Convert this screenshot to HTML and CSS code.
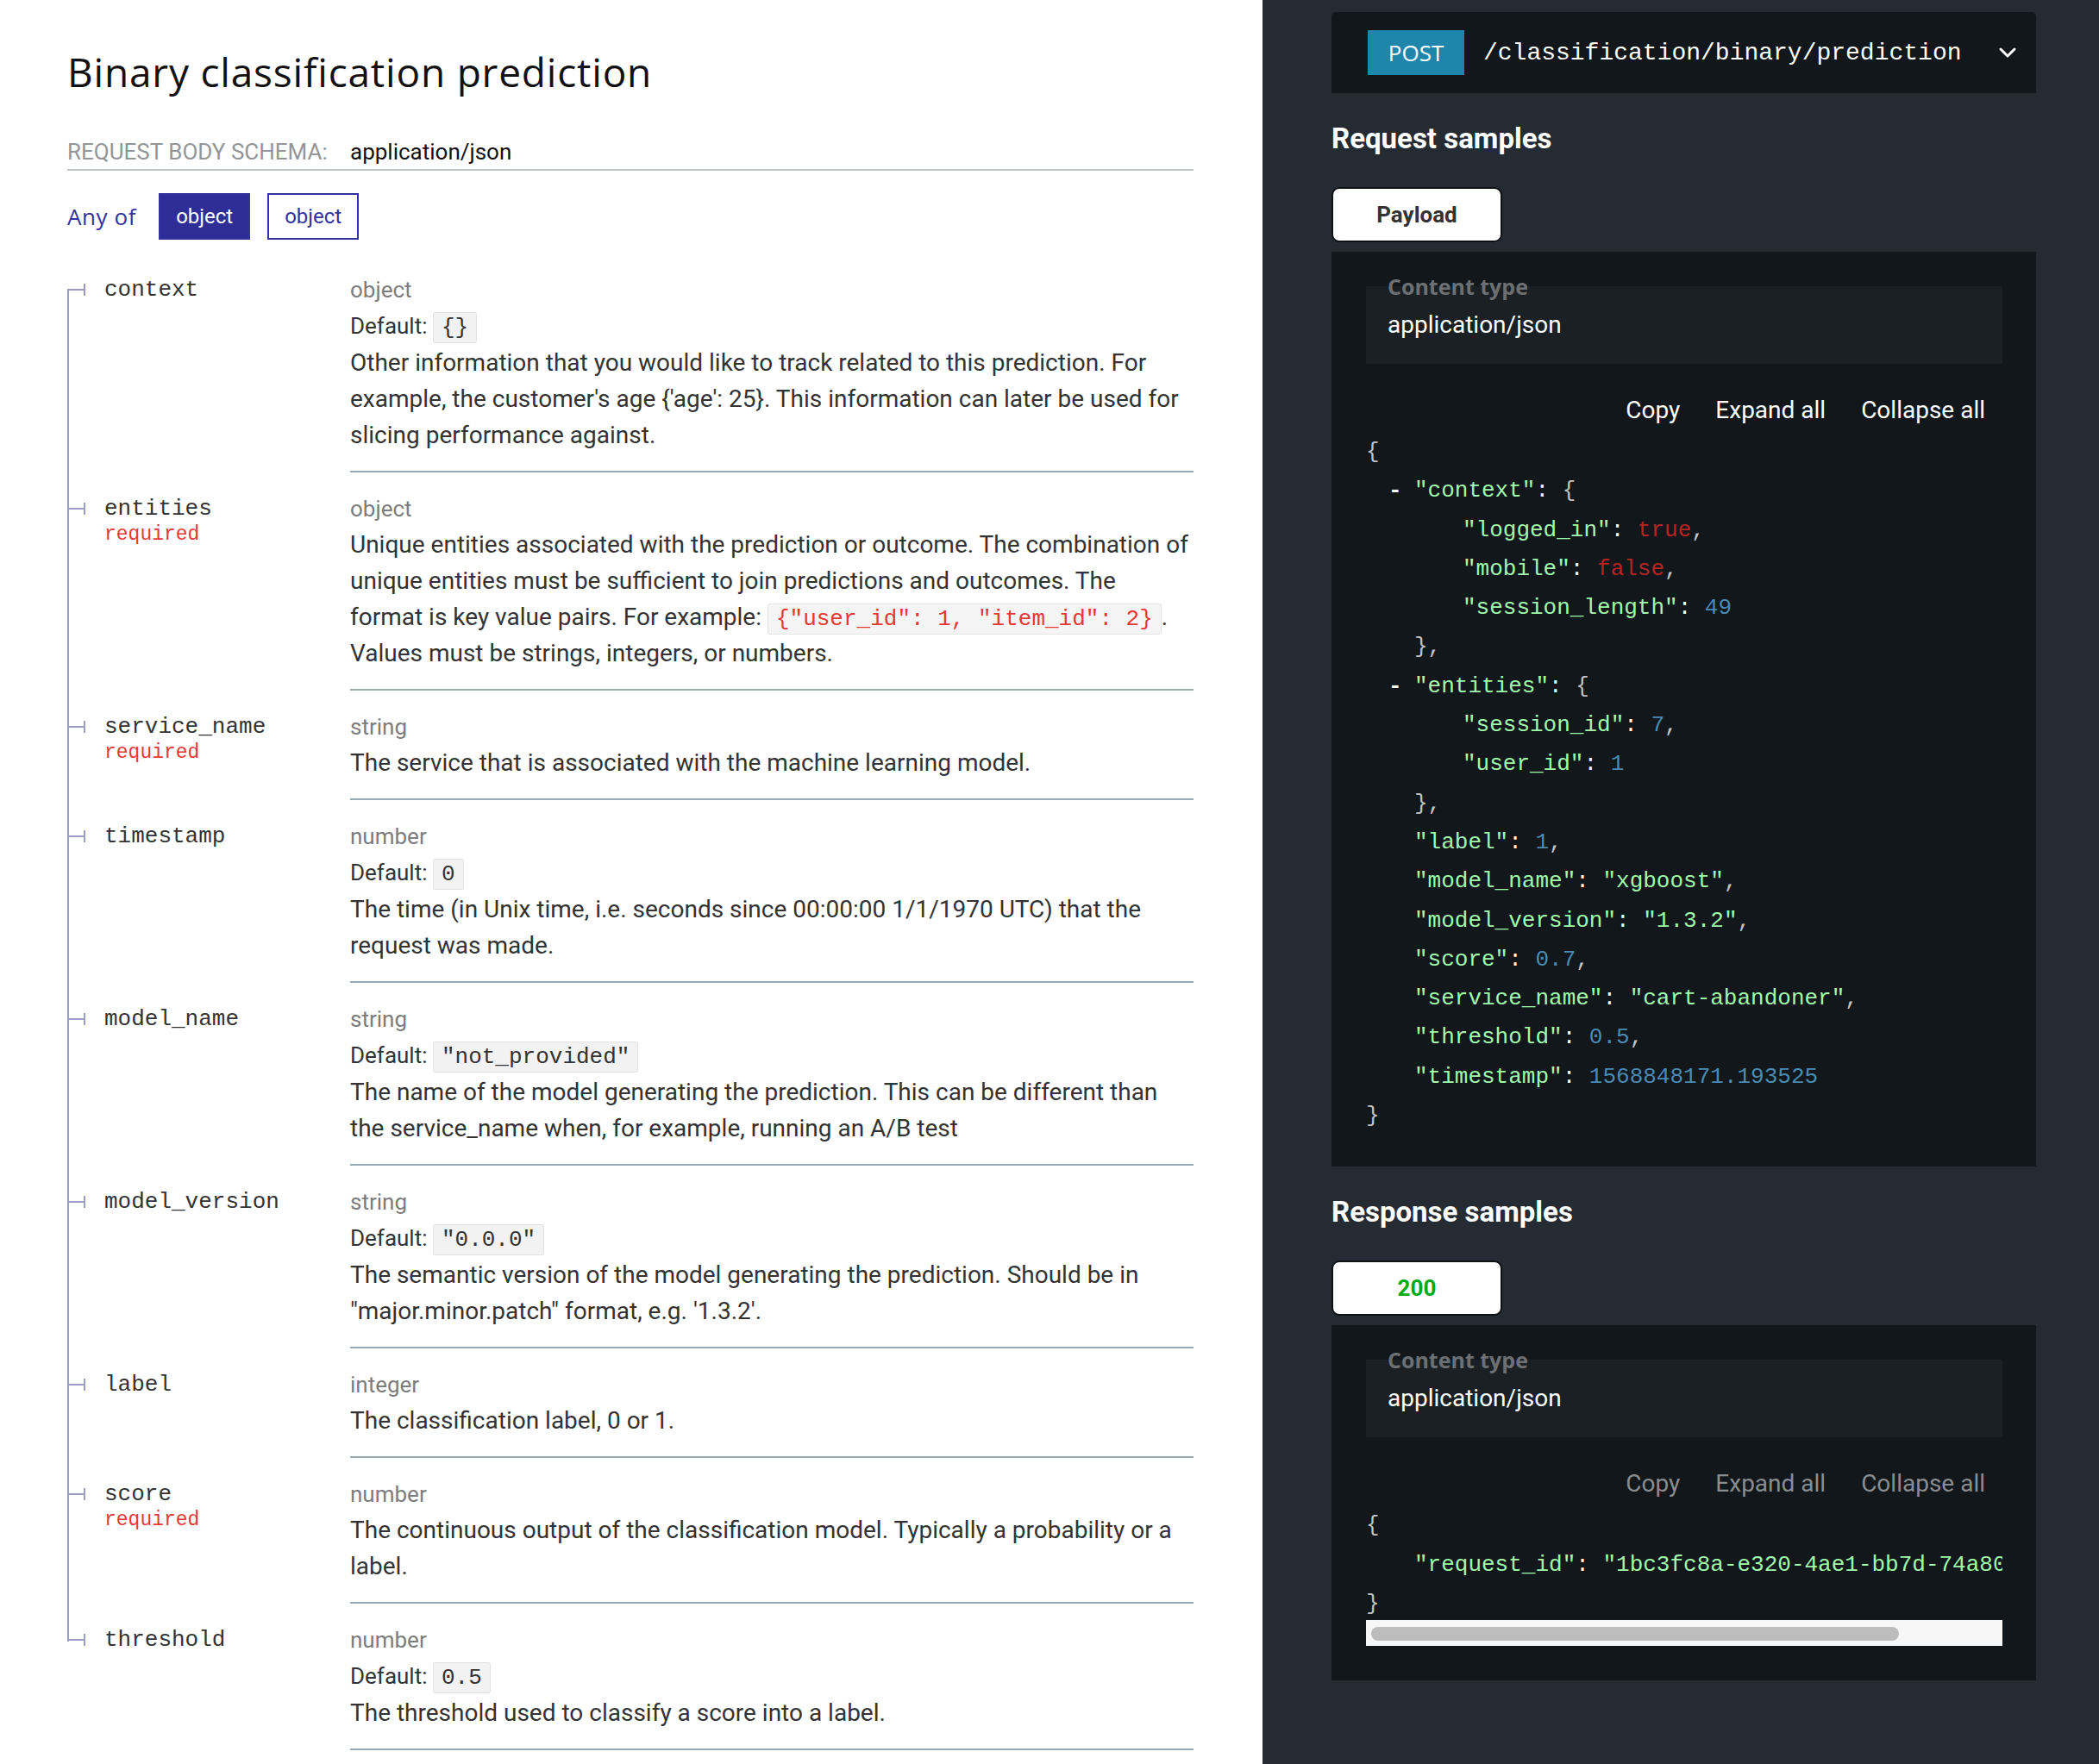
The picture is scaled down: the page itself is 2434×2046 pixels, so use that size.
FILE: index.html
```html
<!DOCTYPE html>
<html lang="en">
<head>
<meta charset="utf-8">
<title>Binary classification prediction</title>
<link rel="stylesheet" href="styles.css">
</head>
<body>
<div class="page">
  <section class="docs">
    <h2 class="title">Binary classification prediction</h2>
    <div class="schema-head"><span class="schema-label">REQUEST BODY SCHEMA:</span><span class="schema-type">application/json</span></div>
    <div class="anyof"><span class="anyof-label">Any of</span><span class="opt opt-active">object</span><span class="opt">object</span></div>

    <div class="props">
      <div class="prop first">
        <div class="prop-name"><span class="pname">context</span></div>
        <div class="prop-detail">
          <div class="ptype">object</div>
          <div class="pdefault">Default: <code class="val">{}</code></div>
          <p class="pdesc">Other information that you would like to track related to this prediction. For example, the customer's age {'age': 25}. This information can later be used for slicing performance against.</p>
        </div>
      </div>
      <div class="prop">
        <div class="prop-name"><span class="pname">entities</span><span class="req">required</span></div>
        <div class="prop-detail">
          <div class="ptype">object</div>
          <p class="pdesc">Unique entities associated with the prediction or outcome. The combination of unique entities must be sufficient to join predictions and outcomes. The format is key value pairs. For example: <code class="inline">{"user_id": 1, "item_id": 2}</code>. Values must be strings, integers, or numbers.</p>
        </div>
      </div>
      <div class="prop">
        <div class="prop-name"><span class="pname">service_name</span><span class="req">required</span></div>
        <div class="prop-detail">
          <div class="ptype">string</div>
          <p class="pdesc">The service that is associated with the machine learning model.</p>
        </div>
      </div>
      <div class="prop">
        <div class="prop-name"><span class="pname">timestamp</span></div>
        <div class="prop-detail">
          <div class="ptype">number</div>
          <div class="pdefault">Default: <code class="val">0</code></div>
          <p class="pdesc">The time (in Unix time, i.e. seconds since 00:00:00 1/1/1970 UTC) that the request was made.</p>
        </div>
      </div>
      <div class="prop">
        <div class="prop-name"><span class="pname">model_name</span></div>
        <div class="prop-detail">
          <div class="ptype">string</div>
          <div class="pdefault">Default: <code class="val">"not_provided"</code></div>
          <p class="pdesc">The name of the model generating the prediction. This can be different than the service_name when, for example, running an A/B test</p>
        </div>
      </div>
      <div class="prop">
        <div class="prop-name"><span class="pname">model_version</span></div>
        <div class="prop-detail">
          <div class="ptype">string</div>
          <div class="pdefault">Default: <code class="val">"0.0.0"</code></div>
          <p class="pdesc">The semantic version of the model generating the prediction. Should be in "major.minor.patch" format, e.g. '1.3.2'.</p>
        </div>
      </div>
      <div class="prop">
        <div class="prop-name"><span class="pname">label</span></div>
        <div class="prop-detail">
          <div class="ptype">integer</div>
          <p class="pdesc">The classification label, 0 or 1.</p>
        </div>
      </div>
      <div class="prop">
        <div class="prop-name"><span class="pname">score</span><span class="req">required</span></div>
        <div class="prop-detail">
          <div class="ptype">number</div>
          <p class="pdesc">The continuous output of the classification model. Typically a probability or a label.</p>
        </div>
      </div>
      <div class="prop last">
        <div class="prop-name"><span class="pname">threshold</span></div>
        <div class="prop-detail">
          <div class="ptype">number</div>
          <div class="pdefault">Default: <code class="val">0.5</code></div>
          <p class="pdesc">The threshold used to classify a score into a label.</p>
        </div>
      </div>
    </div>
  </section>

  <aside class="samples">
    <div class="endpoint">
      <span class="method">POST</span>
      <span class="path">/classification/binary/prediction</span>
      <svg class="chevron" width="20" height="12" viewBox="0 0 20 12"><polyline points="2,2 10,10 18,2" fill="none" stroke="#ffffff" stroke-width="3" stroke-linecap="round" stroke-linejoin="round"/></svg>
    </div>

    <h3 class="sample-title">Request samples</h3>
    <div class="tabs"><span class="tab">Payload</span></div>
    <div class="panel">
      <div class="ctype">
        <span class="ctype-label">Content type</span>
        <div class="ctype-value">application/json</div>
      </div>
      <div class="tools"><span class="tool">Copy</span><span class="tool">Expand all</span><span class="tool">Collapse all</span></div>
      <div class="json">
        <div class="jl"><span class="br">{</span></div>
        <div class="jl i1"><span class="col">-</span><span class="s">"context"</span><span class="p">: </span><span class="br">{</span></div>
        <div class="jl i2"><span class="s">"logged_in"</span><span class="p">: </span><span class="b">true</span><span class="cm">,</span></div>
        <div class="jl i2"><span class="s">"mobile"</span><span class="p">: </span><span class="b">false</span><span class="cm">,</span></div>
        <div class="jl i2"><span class="s">"session_length"</span><span class="p">: </span><span class="n">49</span></div>
        <div class="jl i1"><span class="br">}</span><span class="cm">,</span></div>
        <div class="jl i1"><span class="col">-</span><span class="s">"entities"</span><span class="p">: </span><span class="br">{</span></div>
        <div class="jl i2"><span class="s">"session_id"</span><span class="p">: </span><span class="n">7</span><span class="cm">,</span></div>
        <div class="jl i2"><span class="s">"user_id"</span><span class="p">: </span><span class="n">1</span></div>
        <div class="jl i1"><span class="br">}</span><span class="cm">,</span></div>
        <div class="jl i1"><span class="s">"label"</span><span class="p">: </span><span class="n">1</span><span class="cm">,</span></div>
        <div class="jl i1"><span class="s">"model_name"</span><span class="p">: </span><span class="s">"xgboost"</span><span class="cm">,</span></div>
        <div class="jl i1"><span class="s">"model_version"</span><span class="p">: </span><span class="s">"1.3.2"</span><span class="cm">,</span></div>
        <div class="jl i1"><span class="s">"score"</span><span class="p">: </span><span class="n">0.7</span><span class="cm">,</span></div>
        <div class="jl i1"><span class="s">"service_name"</span><span class="p">: </span><span class="s">"cart-abandoner"</span><span class="cm">,</span></div>
        <div class="jl i1"><span class="s">"threshold"</span><span class="p">: </span><span class="n">0.5</span><span class="cm">,</span></div>
        <div class="jl i1"><span class="s">"timestamp"</span><span class="p">: </span><span class="n">1568848171.193525</span></div>
        <div class="jl"><span class="br">}</span></div>
      </div>
    </div>

    <h3 class="sample-title">Response samples</h3>
    <div class="tabs"><span class="tab tab-ok">200</span></div>
    <div class="panel panel-resp">
      <div class="ctype">
        <span class="ctype-label">Content type</span>
        <div class="ctype-value">application/json</div>
      </div>
      <div class="tools tools-dim"><span class="tool">Copy</span><span class="tool">Expand all</span><span class="tool">Collapse all</span></div>
      <div class="json json-clip">
        <div class="jl"><span class="br">{</span></div>
        <div class="jl i1"><span class="s">"request_id"</span><span class="p">: </span><span class="s">"1bc3fc8a-e320-4ae1-bb7d-74a80f1e9ac2"</span></div>
        <div class="jl"><span class="br">}</span></div>
      </div>
      <div class="hscroll"><div class="hthumb"></div></div>
    </div>
  </aside>
</div>
</body>
</html>
```
FILE: styles.css
```css
html, body {
  margin: 0;
  padding: 0;
}

body {
  font-family: Roboto, "Liberation Sans", sans-serif;
  color: #333333;
  background: #ffffff;
}

.page {
  display: flex;
  width: 2434px;
  min-height: 2046px;
}

/* ---------- left documentation column ---------- */
.docs {
  flex: 0 0 1464px;
  box-sizing: border-box;
  padding: 53px 80px 0 78px;
  background: #ffffff;
}

.title {
  margin: 0;
  font-family: "Open Sans", "Noto Sans", sans-serif;
  font-weight: 400;
  font-size: 46px;
  line-height: 60px;
  letter-spacing: 0.8px;
  color: #111111;
}

.schema-head {
  margin-top: 46px;
  line-height: 34px;
  padding-bottom: 3px;
  border-bottom: 2px solid #bfc2c5;
  font-size: 26px;
  display: flex;
}

.schema-label {
  flex: 0 0 328px;
  color: #939597;
}

.schema-type {
  color: #111111;
}

.anyof {
  margin-top: 26px;
  display: flex;
  align-items: center;
  height: 54px;
}

.anyof-label {
  font-family: "Open Sans", "Noto Sans", sans-serif;
  font-size: 26px;
  letter-spacing: 0.6px;
  color: #32329f;
  margin-right: 26px;
}

.opt {
  box-sizing: border-box;
  height: 54px;
  width: 106px;
  display: flex;
  align-items: center;
  justify-content: center;
  font-size: 24px;
  color: #32329f;
  border: 2px solid #32329f;
  margin-right: 20px;
}

.opt-active {
  background: #2e2e96;
  color: #ffffff;
}

.props {
  margin-top: 16px;
}

.prop {
  display: grid;
  grid-template-columns: 328px 1fr;
}

.prop-name {
  position: relative;
  padding: 21px 0 0 43px;
}

.prop-name::before {
  content: "";
  position: absolute;
  left: 0;
  top: 0;
  bottom: 0;
  width: 2px;
  background: #9c9cc9;
}

.prop.first .prop-name::before {
  top: 42px;
}

.prop.last .prop-name::before {
  bottom: auto;
  height: 44px;
}

.prop-name::after {
  content: "";
  position: absolute;
  left: 0;
  top: 35px;
  width: 21px;
  height: 14px;
  box-sizing: border-box;
  border-right: 2px solid #9c9cc9;
  background: linear-gradient(#9c9cc9, #9c9cc9) no-repeat 0 6px / 100% 2px;
}

.pname {
  display: block;
  font-family: "Liberation Mono", "Courier New", monospace;
  font-size: 26px;
  line-height: 42px;
  color: #333333;
}

.req {
  display: block;
  font-family: "Liberation Mono", "Courier New", monospace;
  font-size: 23px;
  line-height: 18px;
  color: #e53935;
}

.prop-detail {
  padding: 21px 0 20px;
  border-bottom: 2px solid #97abb5;
}

.ptype {
  font-size: 26px;
  line-height: 42px;
  color: #7d7d7d;
}

.pdefault {
  font-size: 26px;
  line-height: 43px;
  height: 43px;
  color: #333333;
}

.val {
  font-family: "Liberation Mono", "Courier New", monospace;
  font-size: 26px;
  line-height: 1;
  color: #333333;
  background: #f2f2f2;
  border: 1px solid #e2e2e2;
  border-radius: 3px;
  padding: 2px 9px;
}

.pdesc {
  margin: 0;
  font-size: 28px;
  line-height: 42px;
  color: #333333;
}

.inline {
  font-family: "Liberation Mono", "Courier New", monospace;
  font-size: 26px;
  line-height: 1;
  color: #e53935;
  background: #f5f5f5;
  border: 1px solid #e4e4e4;
  border-radius: 3px;
  padding: 2px 9px;
}

/* ---------- right samples column ---------- */
.samples {
  flex: 1 1 0;
  min-width: 0;
  background: #252b32;
  padding: 14px 73px 40px 80px;
  color: #ffffff;
}

.endpoint {
  height: 94px;
  background: #11171a;
  border-radius: 5px 5px 0 0;
  display: flex;
  align-items: center;
  padding: 0 23px 0 42px;
}

.method {
  width: 112px;
  height: 52px;
  background: #1f86ab;
  display: flex;
  align-items: center;
  justify-content: center;
  font-family: "Open Sans", "Noto Sans", sans-serif;
  font-size: 26px;
  color: #ffffff;
}

.path {
  margin-left: 22px;
  flex: 1;
  font-family: "Liberation Mono", "Courier New", monospace;
  font-size: 28px;
  color: #ffffff;
}

.chevron {
  display: block;
}

.sample-title {
  margin: 33px 0 0;
  font-size: 33px;
  line-height: 40px;
  font-weight: 700;
  color: #ffffff;
}

.tabs {
  margin-top: 36px;
  display: flex;
}

.tab {
  box-sizing: border-box;
  width: 198px;
  height: 64px;
  display: flex;
  align-items: center;
  justify-content: center;
  background: #ffffff;
  border: 2px solid #0f1214;
  border-radius: 9px;
  font-size: 26px;
  font-weight: 700;
  color: #333333;
}

.tab-ok {
  color: #00aa13;
}

.panel {
  margin-top: 11px;
  background: #11171a;
  padding: 40px 39px 36px 40px;
}

.panel-resp {
  padding-bottom: 40px;
}

.ctype {
  position: relative;
  background: #1a2024;
  padding: 24px 25px 24px;
}

.ctype-label {
  position: absolute;
  left: 25px;
  top: -12px;
  font-family: "Open Sans", "Noto Sans", sans-serif;
  font-size: 25px;
  line-height: 24px;
  font-weight: 700;
  color: #6d7073;
}

.ctype-value {
  font-size: 28px;
  line-height: 42px;
  color: #ffffff;
}

.tools {
  margin-top: 33px;
  display: flex;
  justify-content: flex-end;
  font-size: 28px;
  line-height: 42px;
  color: #ffffff;
}

.tool {
  padding: 0 20px 0 21px;
}

.tools-dim {
  color: #8a8d90;
}

.json {
  margin-top: 5px;
  font-family: "Liberation Mono", "Courier New", monospace;
  font-size: 26px;
  line-height: 45.3px;
  color: #ffffff;
}

.json-clip {
  overflow: hidden;
}

.jl {
  position: relative;
  white-space: pre;
}

.i1 {
  padding-left: 56px;
}

.i2 {
  padding-left: 112px;
}

.col {
  position: absolute;
  left: 26px;
  top: 0;
  font-weight: 700;
  color: #ffffff;
}

.s {
  color: #a0fbaa;
}

.n {
  color: #4a8bb3;
}

.b {
  color: #b82323;
}

.p {
  color: #ffffff;
}

.br,
.cm {
  color: #c4c4c4;
}

.hscroll {
  margin-top: -4px;
  height: 30px;
  background: #f7f7f7;
  position: relative;
}

.hthumb {
  position: absolute;
  left: 6px;
  top: 8px;
  width: 612px;
  height: 16px;
  border-radius: 8px;
  background: #bdbdbd;
}
```
